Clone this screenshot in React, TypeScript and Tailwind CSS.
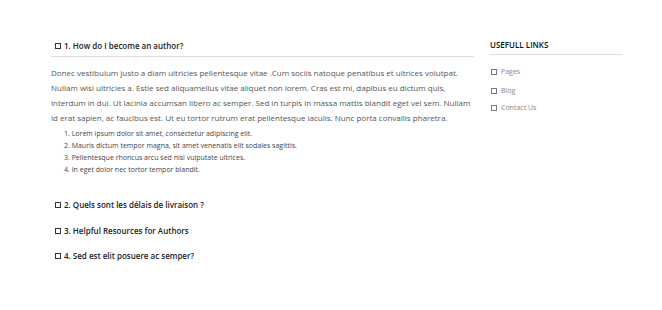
import React from 'react';

const font = { fontFamily: '"Open Sans", "Noto Sans", sans-serif' };

function Box({ className = '' }: { className?: string }) {
  return <span className={`inline-block w-[6px] h-[6px] border border-[#333] shrink-0 ${className}`} />;
}

function Question({ text }: { text: string }) {
  return (
    <div className="flex items-center h-[16px] pl-[4px] text-[8px] font-semibold text-[#222]">
      <Box className="mr-[3px]" />
      <span>{text}</span>
    </div>
  );
}

const links = [
  { label: 'Pages', mt: 'mt-[9px]' },
  { label: 'Blog', mt: 'mt-[3px]' },
  { label: 'Contact Us', mt: 'mt-[1px]' },
];

export default function App() {
  return (
    <div className="w-[662px] h-[310px] bg-white" style={font}>
      <div className="flex pt-[38px] pl-[51px] gap-[16px]">
        {/* ─── FAQ column ─── */}
        <div className="w-[423px]">
          <div className="border-b border-[#ddd] pb-[2px]">
            <Question text="1. How do I become an author?" />
          </div>
          <p className="mt-[8px] text-[8px] leading-[15px] text-[#555]">
            Donec vestibulum justo a diam ultricies pellentesque vitae .Cum sociis natoque penatibus et ultrices volutpat.
            Nullam wisi ultricies a. Estie sed aliquamellus vitae aliquet non lorem. Cras est mi, dapibus eu dictum quis,
            interdum in dui. Ut lacinia accumsan libero ac semper. Sed in turpis in massa mattis blandit eget vel sem. Nullam
            id erat sapien, ac faucibus est. Ut eu tortor rutrum erat pellentesque iaculis. Nunc porta convallis pharetra.
          </p>
          <ol className="mt-[3px] pl-[13px] text-[7px] leading-[12px] text-[#444]">
            <li>1. Lorem ipsum dolor sit amet, consectetur adipiscing elit.</li>
            <li>2. Mauris dictum tempor magna, sit amet venenatis elit sodales sagittis.</li>
            <li>3. Pellentesque rhoncus arcu sed nisl vulputate ultrices.</li>
            <li>4. In eget dolor nec tortor tempor blandit.</li>
          </ol>
          <div className="mt-[21px] flex flex-col gap-[9.5px]">
            <Question text="2. Quels sont les délais de livraison ?" />
            <Question text="3. Helpful Resources for Authors" />
            <Question text="4. Sed est elit posuere ac semper?" />
          </div>
        </div>

        {/* ─── Sidebar ─── */}
        <div className="w-[132px]">
          <div className="h-[17px] flex items-center border-b border-[#ddd] pb-[2px] text-[8px] font-semibold text-[#111] uppercase">
            Usefull Links
          </div>
          <ul className="text-[7px] text-[#888]">
            {links.map((l) => (
              <li key={l.label} className={`flex items-center h-[16px] pl-[1px] ${l.mt}`}>
                <Box className="mr-[4px] border-[#777]" />
                {l.label}
              </li>
            ))}
          </ul>
        </div>
      </div>
    </div>
  );
}
